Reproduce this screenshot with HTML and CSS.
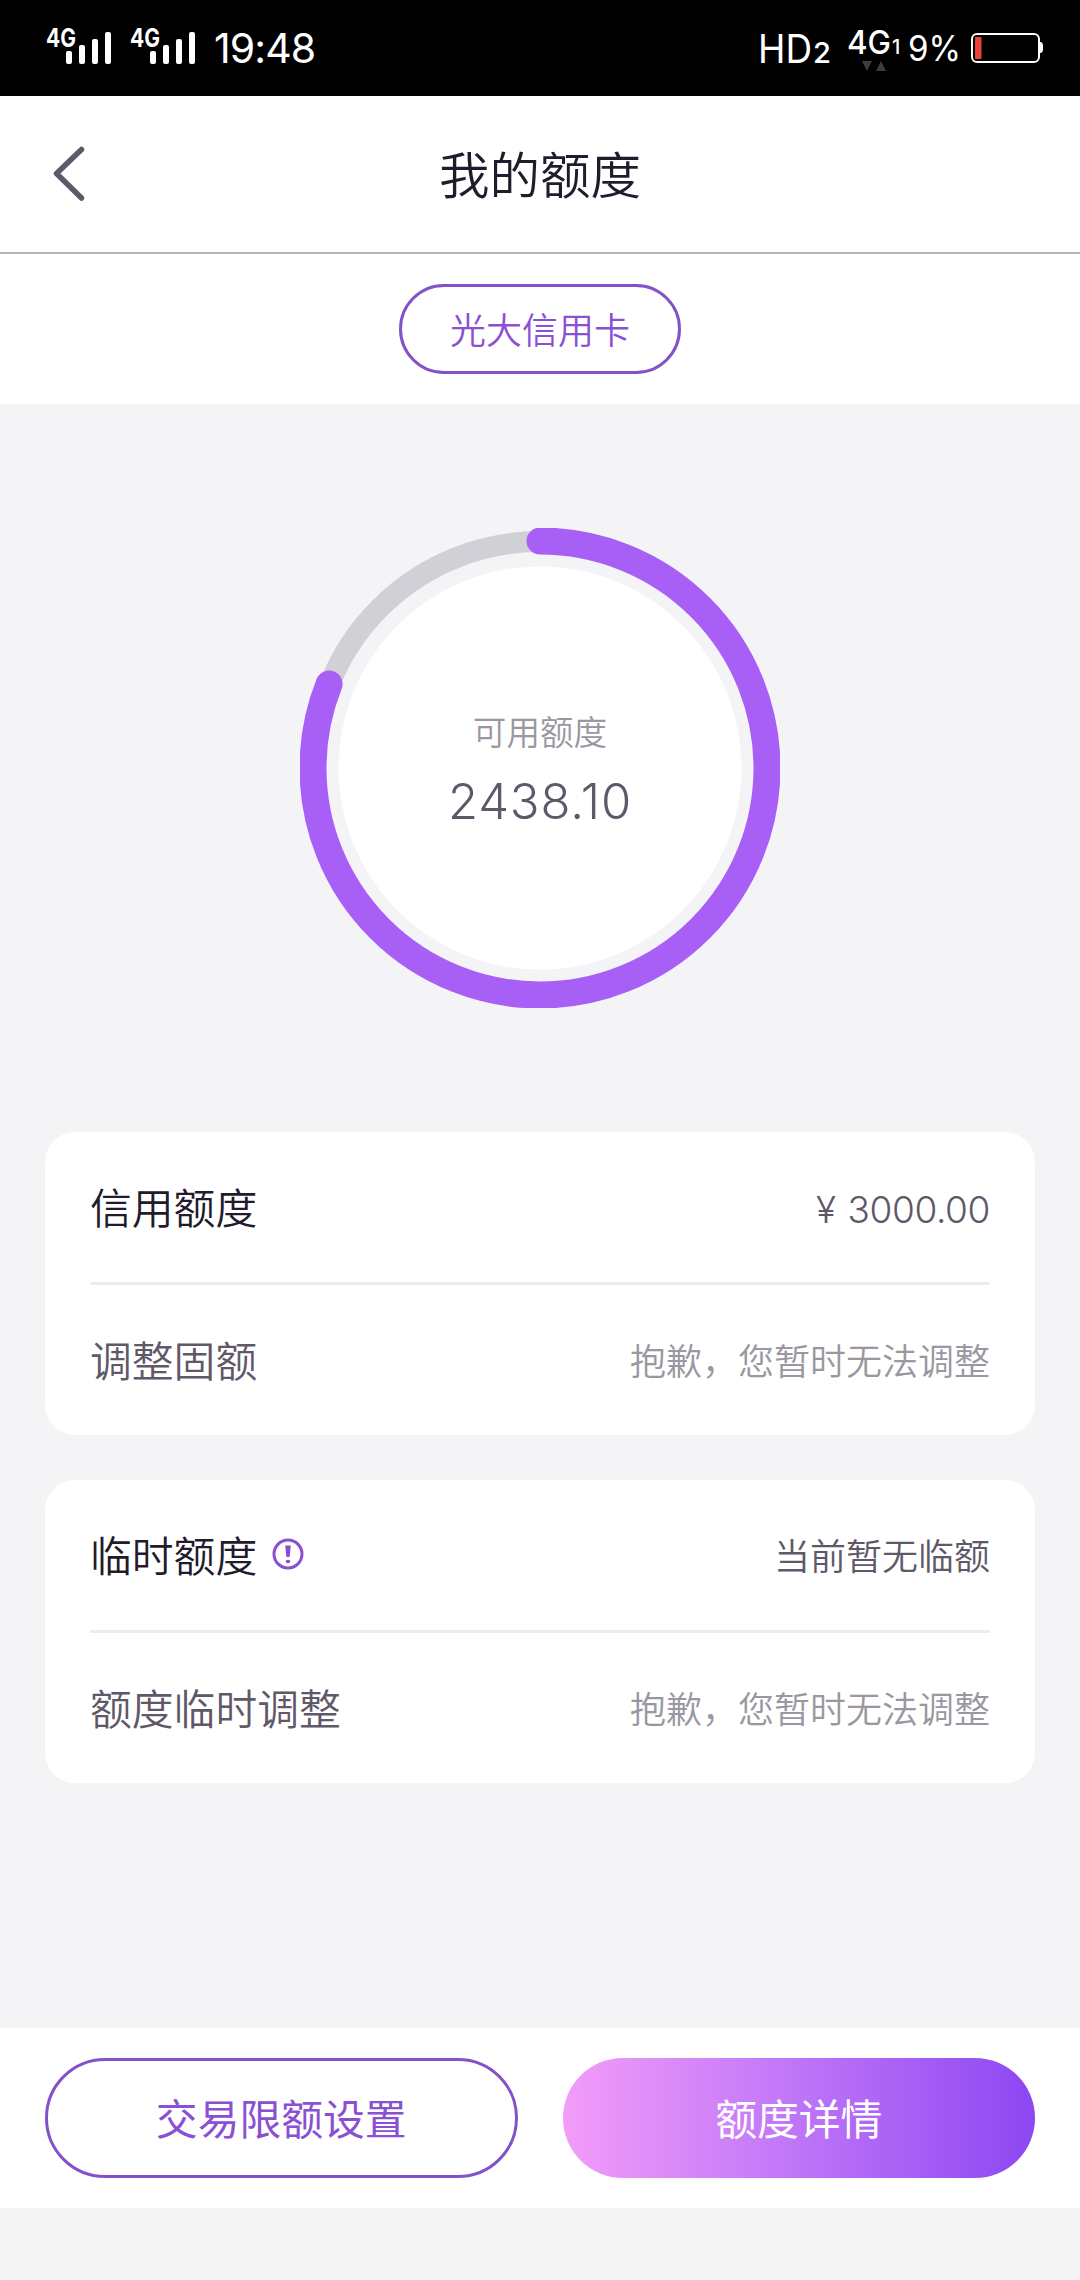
FILE: index.html
```html
<!DOCTYPE html>
<html lang="zh-CN">
<head>
	<meta charset="UTF-8">
	<title>我的额度</title>
	<link rel="stylesheet" href="styles.css">
</head>

<body>
	<div class="status">
		<svg class="signal" width="66" height="48" viewBox="0 -4 66 48">
			<text x="0" y="19" textLength="30" lengthAdjust="spacingAndGlyphs">4G</text>
			<rect x="20" y="23" width="6" height="13" rx="2"/>
			<rect x="33" y="17" width="6" height="19" rx="2"/>
			<rect x="46" y="11" width="6" height="25" rx="2"/>
			<rect x="59" y="4" width="6" height="32" rx="2"/>
		</svg>
		<svg class="signal" width="66" height="48" viewBox="0 -4 66 48">
			<text x="0" y="19" textLength="30" lengthAdjust="spacingAndGlyphs">4G</text>
			<rect x="20" y="23" width="6" height="13" rx="2"/>
			<rect x="33" y="17" width="6" height="19" rx="2"/>
			<rect x="46" y="11" width="6" height="25" rx="2"/>
			<rect x="59" y="4" width="6" height="32" rx="2"/>
		</svg>
		<span class="time">19:48</span>
		<svg class="net" width="290" height="50" viewBox="0 0 290 50">
			<text x="0" y="40" font-size="40" textLength="54" lengthAdjust="spacingAndGlyphs">HD</text>
			<text class="bold" x="55" y="40" font-size="28" textLength="18" lengthAdjust="spacingAndGlyphs">2</text>
			<text class="bold" x="89" y="31" font-size="33" textLength="44" lengthAdjust="spacingAndGlyphs">4G</text>
			<text class="bold" x="134" y="31" font-size="20">1</text>
			<path d="M104 38h10l-5 10zM118 48h10l-5-10z" fill="#3c3c3c"/>
			<text x="150" y="38" font-size="35" textLength="53" lengthAdjust="spacingAndGlyphs">9%</text>
			<rect x="214" y="11" width="67" height="28" rx="5" fill="none" stroke="#fff" stroke-width="2"/>
			<rect x="217" y="14" width="6.500" height="22" rx="1" fill="#e8433a"/>
			<path d="M282 19h1q2 1 2 3v5q0 2-2 3h-1z"/>
		</svg>
	</div>
	<div class="header">
		<svg class="back" width="38" height="60" viewBox="0 0 38 60"><path d="M33.500 5.500L8.500 29.500l25 24.500"/></svg>
		<h1>我的额度</h1>
	</div>
	<div class="tabs"><span class="tab">光大信用卡</span></div>

	<div class="main">
		<div class="ring">
			<svg width="480" height="480" viewBox="0 0 480 480">
				<circle class="inner" cx="240" cy="240" r="201.500"/>
				<circle class="track" cx="240" cy="240" r="226.500"/>
				<circle class="bar" cx="240" cy="240" r="227" pathLength="1000" stroke-dasharray="810.300 1000" transform="rotate(-90 240 240)"/>
			</svg>
			<div class="ring-text">
				<p>可用额度</p>
				<b>2438.10</b>
			</div>
		</div>

		<div class="card">
			<div class="row">
				<span class="name">信用额度</span>
				<span class="val num">¥ 3000.00</span>
			</div>
			<div class="row sub">
				<span class="name">调整固额</span>
				<span class="val">抱歉，您暂时无法调整</span>
			</div>
		</div>
		<div class="card">
			<div class="row">
				<span class="name">临时额度</span>
				<svg class="tip" width="32" height="32" viewBox="0 0 32 32">
					<circle cx="16" cy="16" r="14"/>
					<path d="M13.200 7.500h5.600l-1.200 11.500h-3.200z"/>
					<ellipse class="dot" cx="16" cy="23.500" rx="2.300" ry="1.800"/>
				</svg>
				<span class="val">当前暂无临额</span>
			</div>
			<div class="row sub">
				<span class="name">额度临时调整</span>
				<span class="val">抱歉，您暂时无法调整</span>
			</div>
		</div>
	</div>

	<div class="footer">
		<a class="btn">交易限额设置</a>
		<a class="btn btn-main">额度详情</a>
	</div>
</body>
</html>
```
FILE: styles.css
```css
*{margin: 0;padding: 0;box-sizing: border-box;}
body {width: 1080px;height: 2280px;background: #f5f5f5;font-family: "Noto Sans CJK SC",sans-serif;font-weight: 350;color: #211b2b;overflow: hidden;}
svg {display: block;flex: none;}

.status {height: 96px;background: #000;color: #fff;display: flex;align-items: center;padding: 0 32px 0 46px;font-family: Inter,sans-serif;}
.status svg {fill: #fff;}
.signal {margin-right: 18px;}
.signal text {font-size: 25px;font-weight: 700;}
.time {font-size: 41px;font-weight: 400;letter-spacing: -0.900px;}
.net {margin-left: auto;}
.net text {font-weight: 400;}
.net .bold {font-weight: 500;}

.header {height: 158px;background: #fff;border-bottom: 2px solid #b5b5b5;display: flex;align-items: center;padding: 0 48px;}
.back path {fill: none;stroke: #5f5869;stroke-width: 5.500;stroke-linecap: round;stroke-linejoin: round;}
.header h1 {flex: 1;padding: 0 38px 4px 0;text-align: center;font-size: 50.500px;font-weight: 350;}

.tabs {height: 150px;background: #fff;display: flex;justify-content: center;align-items: center;}
.tab {width: 282px;height: 90px;border: 3px solid #8452c8;border-radius: 45px;text-align: center;line-height: 83px;font-size: 36px;color: #8a50d4;}

.main {height: 1624px;background: #f4f4f7;padding: 124px 45px 0;}
.ring {width: 480px;height: 480px;margin: 0 auto 124px;display: grid;}
.ring svg,.ring-text {grid-area: 1/1;}
.inner {fill: #fff;}
.track {fill: none;stroke: #d2d0d7;stroke-width: 21;}
.bar {fill: none;stroke: #a75ff6;stroke-width: 27;stroke-linecap: round;}
.ring-text {text-align: center;padding-top: 178px;}
.ring-text p {font-size: 33.600px;line-height: 50px;color: #9a97a0;}
.ring-text b {display: block;font: 350 49px/60px Inter,sans-serif;letter-spacing: 0.900px;margin-top: 16px;color: #5f5869;}

.card {height: 303px;background: #fff;border-radius: 30px;padding: 0 45px;margin-bottom: 45px;}
.row {height: 150px;display: flex;align-items: center;}
.sub {height: 153px;border-top: 3px solid #ececec;}
.name {font-size: 41.800px;padding-bottom: 2px;}
.val {margin-left: auto;font-size: 36px;color: #5f5869;padding-bottom: 2px;}
.num {font-family: Inter,sans-serif;font-size: 37px;letter-spacing: -0.400px;word-spacing: 2px;padding: 4px 0 0;}
.sub .name {color: #5f5869;}
.sub .val {color: #9a97a0;}
.tip {margin: -2px 0 0 15px;fill: #8a50d4;}
.tip circle {fill: none;stroke: #8a50d4;stroke-width: 3;}

.footer {height: 180px;background: #fff;display: grid;grid-template-columns: 1fr 1fr;gap: 45px;padding: 30px 45px;}
.btn {height: 120px;border: 3px solid #8452c8;border-radius: 60px;text-align: center;line-height: 113px;font-size: 41.800px;font-weight: 400;color: #8a50d4;}
.btn-main {border: 0;line-height: 119px;color: #fff;background: linear-gradient(90deg,#f39cf9,#c379f8 45%,#8d47f2);}
```
